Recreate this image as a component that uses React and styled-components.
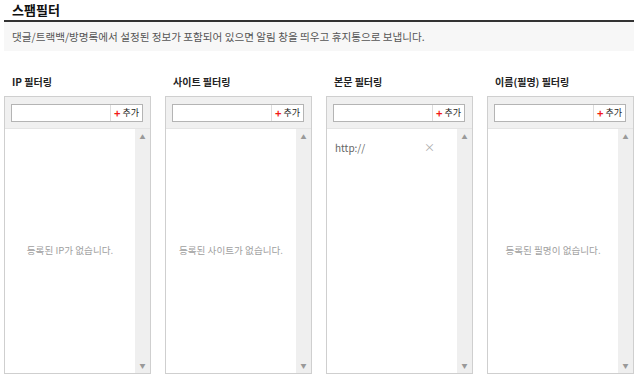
import React from "react";
import styled, { createGlobalStyle } from "styled-components";

const GlobalStyle = createGlobalStyle`
  html, body {
    margin: 0;
    padding: 0;
    background: #fff;
  }
  body {
    font-family: "Noto Sans CJK KR", "DejaVu Sans", sans-serif;
    color: #333;
  }
`;

const Page = styled.div`
  width: 630px;
  padding: 0 6px 0 4px;
`;

const Title = styled.h1`
  margin: 0;
  height: 18px;
  padding: 2px 0 0 8px;
  font-size: 13px;
  font-weight: bold;
  line-height: 15px;
  color: #111;
  border-bottom: 2px solid #333;
`;

const Desc = styled.div`
  height: 29px;
  padding-left: 8px;
  background: #f7f7f7;
  font-size: 10.6px;
  line-height: 30px;
  color: #555;
`;

const Columns = styled.div`
  display: grid;
  grid-template-columns: repeat(4, 147px);
  column-gap: 14px;
  margin-top: 23px;
`;

const Column = styled.div`
  display: flex;
  flex-direction: column;
  min-width: 0;
`;

const Heading = styled.h2`
  margin: 0 0 7px 8px;
  font-size: 10px;
  font-weight: bold;
  line-height: 15px;
  color: #222;
`;

const Panel = styled.div`
  height: 276px;
  border: 1px solid #cfcfcf;
  display: flex;
  flex-direction: column;
`;

const Toolbar = styled.div`
  height: 31px;
  background: #f0f0f0;
  display: flex;
  align-items: center;
  padding: 0 7px 0 6px;
  box-sizing: border-box;
`;

const InputGroup = styled.div`
  flex: 1;
  min-width: 0;
  height: 18px;
  display: flex;
  border: 1px solid #b4b4b4;
  background: #fff;
  box-sizing: border-box;
`;

const Field = styled.input`
  flex: 1;
  min-width: 0;
  width: 100%;
  border: 0;
  padding: 0 3px;
  outline: none;
  font-size: 10px;
`;

const AddButton = styled.button`
  width: 32px;
  flex: none;
  border: 0;
  border-left: 1px solid #ddd;
  background: #fff;
  padding: 0;
  display: flex;
  align-items: center;
  justify-content: center;
  gap: 2px;
  font-family: inherit;
  font-size: 9px;
  color: #222;
  cursor: pointer;
`;

const Plus = styled.span`
  color: #f21818;
  font-weight: bold;
  font-size: 11px;
  line-height: 10px;
`;

const Body = styled.div`
  flex: 1;
  display: flex;
  border-top: 1px solid #e4e4e4;
`;

const List = styled.div`
  flex: 1;
  display: flex;
  flex-direction: column;
  justify-content: ${p => (p.empty ? "center" : "flex-start")};
  align-items: ${p => (p.empty ? "center" : "stretch")};
  padding-top: ${p => (p.empty ? "0" : "10px")};
  padding-bottom: ${p => (p.empty ? "2px" : "0")};
`;

const Empty = styled.div`
  font-size: 9.6px;
  color: #a0a0a0;
`;

const Item = styled.div`
  display: flex;
  justify-content: space-between;
  align-items: center;
  padding: 0 22px 0 8px;
  font-size: 10px;
  color: #666;
  height: 16px;
`;

const Remove = styled.span`
  color: #aaa;
  font-size: 11px;
`;

const Scrollbar = styled.div`
  width: 15px;
  background: #efefef;
  display: flex;
  flex-direction: column;
  justify-content: space-between;
  align-items: center;
  padding: 4px 0 3px;
`;

const Arrow = styled.span`
  font-size: 6px;
  color: #999;
  line-height: 8px;
`;

const filters = [
  { title: "IP 필터링", empty: "등록된 IP가 없습니다.", items: [] },
  { title: "사이트 필터링", empty: "등록된 사이트가 없습니다.", items: [] },
  { title: "본문 필터링", empty: "", items: ["http://"] },
  { title: "이름(필명) 필터링", empty: "등록된 필명이 없습니다.", items: [] }
];

const App = () => {
  return (
    <Page>
      <GlobalStyle />
      <Title>스팸필터</Title>
      <Desc>
        댓글/트랙백/방명록에서 설정된 정보가 포함되어 있으면 알림 창을 띄우고 휴지통으로 보냅니다.
      </Desc>
      <Columns>
        {filters.map((f, i) => (
          <Column key={`FILTER-${i}`}>
            <Heading>{f.title}</Heading>
            <Panel>
              <Toolbar>
                <InputGroup>
                  <Field type="text" />
                  <AddButton>
                    <Plus>+</Plus>추가
                  </AddButton>
                </InputGroup>
              </Toolbar>
              <Body>
                <List empty={f.items.length === 0}>
                  {f.items.length === 0 ? (
                    <Empty>{f.empty}</Empty>
                  ) : (
                    f.items.map((it, j) => (
                      <Item key={`ITEM-${j}`}>
                        {it}
                        <Remove>×</Remove>
                      </Item>
                    ))
                  )}
                </List>
                <Scrollbar>
                  <Arrow>▲</Arrow>
                  <Arrow>▼</Arrow>
                </Scrollbar>
              </Body>
            </Panel>
          </Column>
        ))}
      </Columns>
    </Page>
  );
};

export default App;
